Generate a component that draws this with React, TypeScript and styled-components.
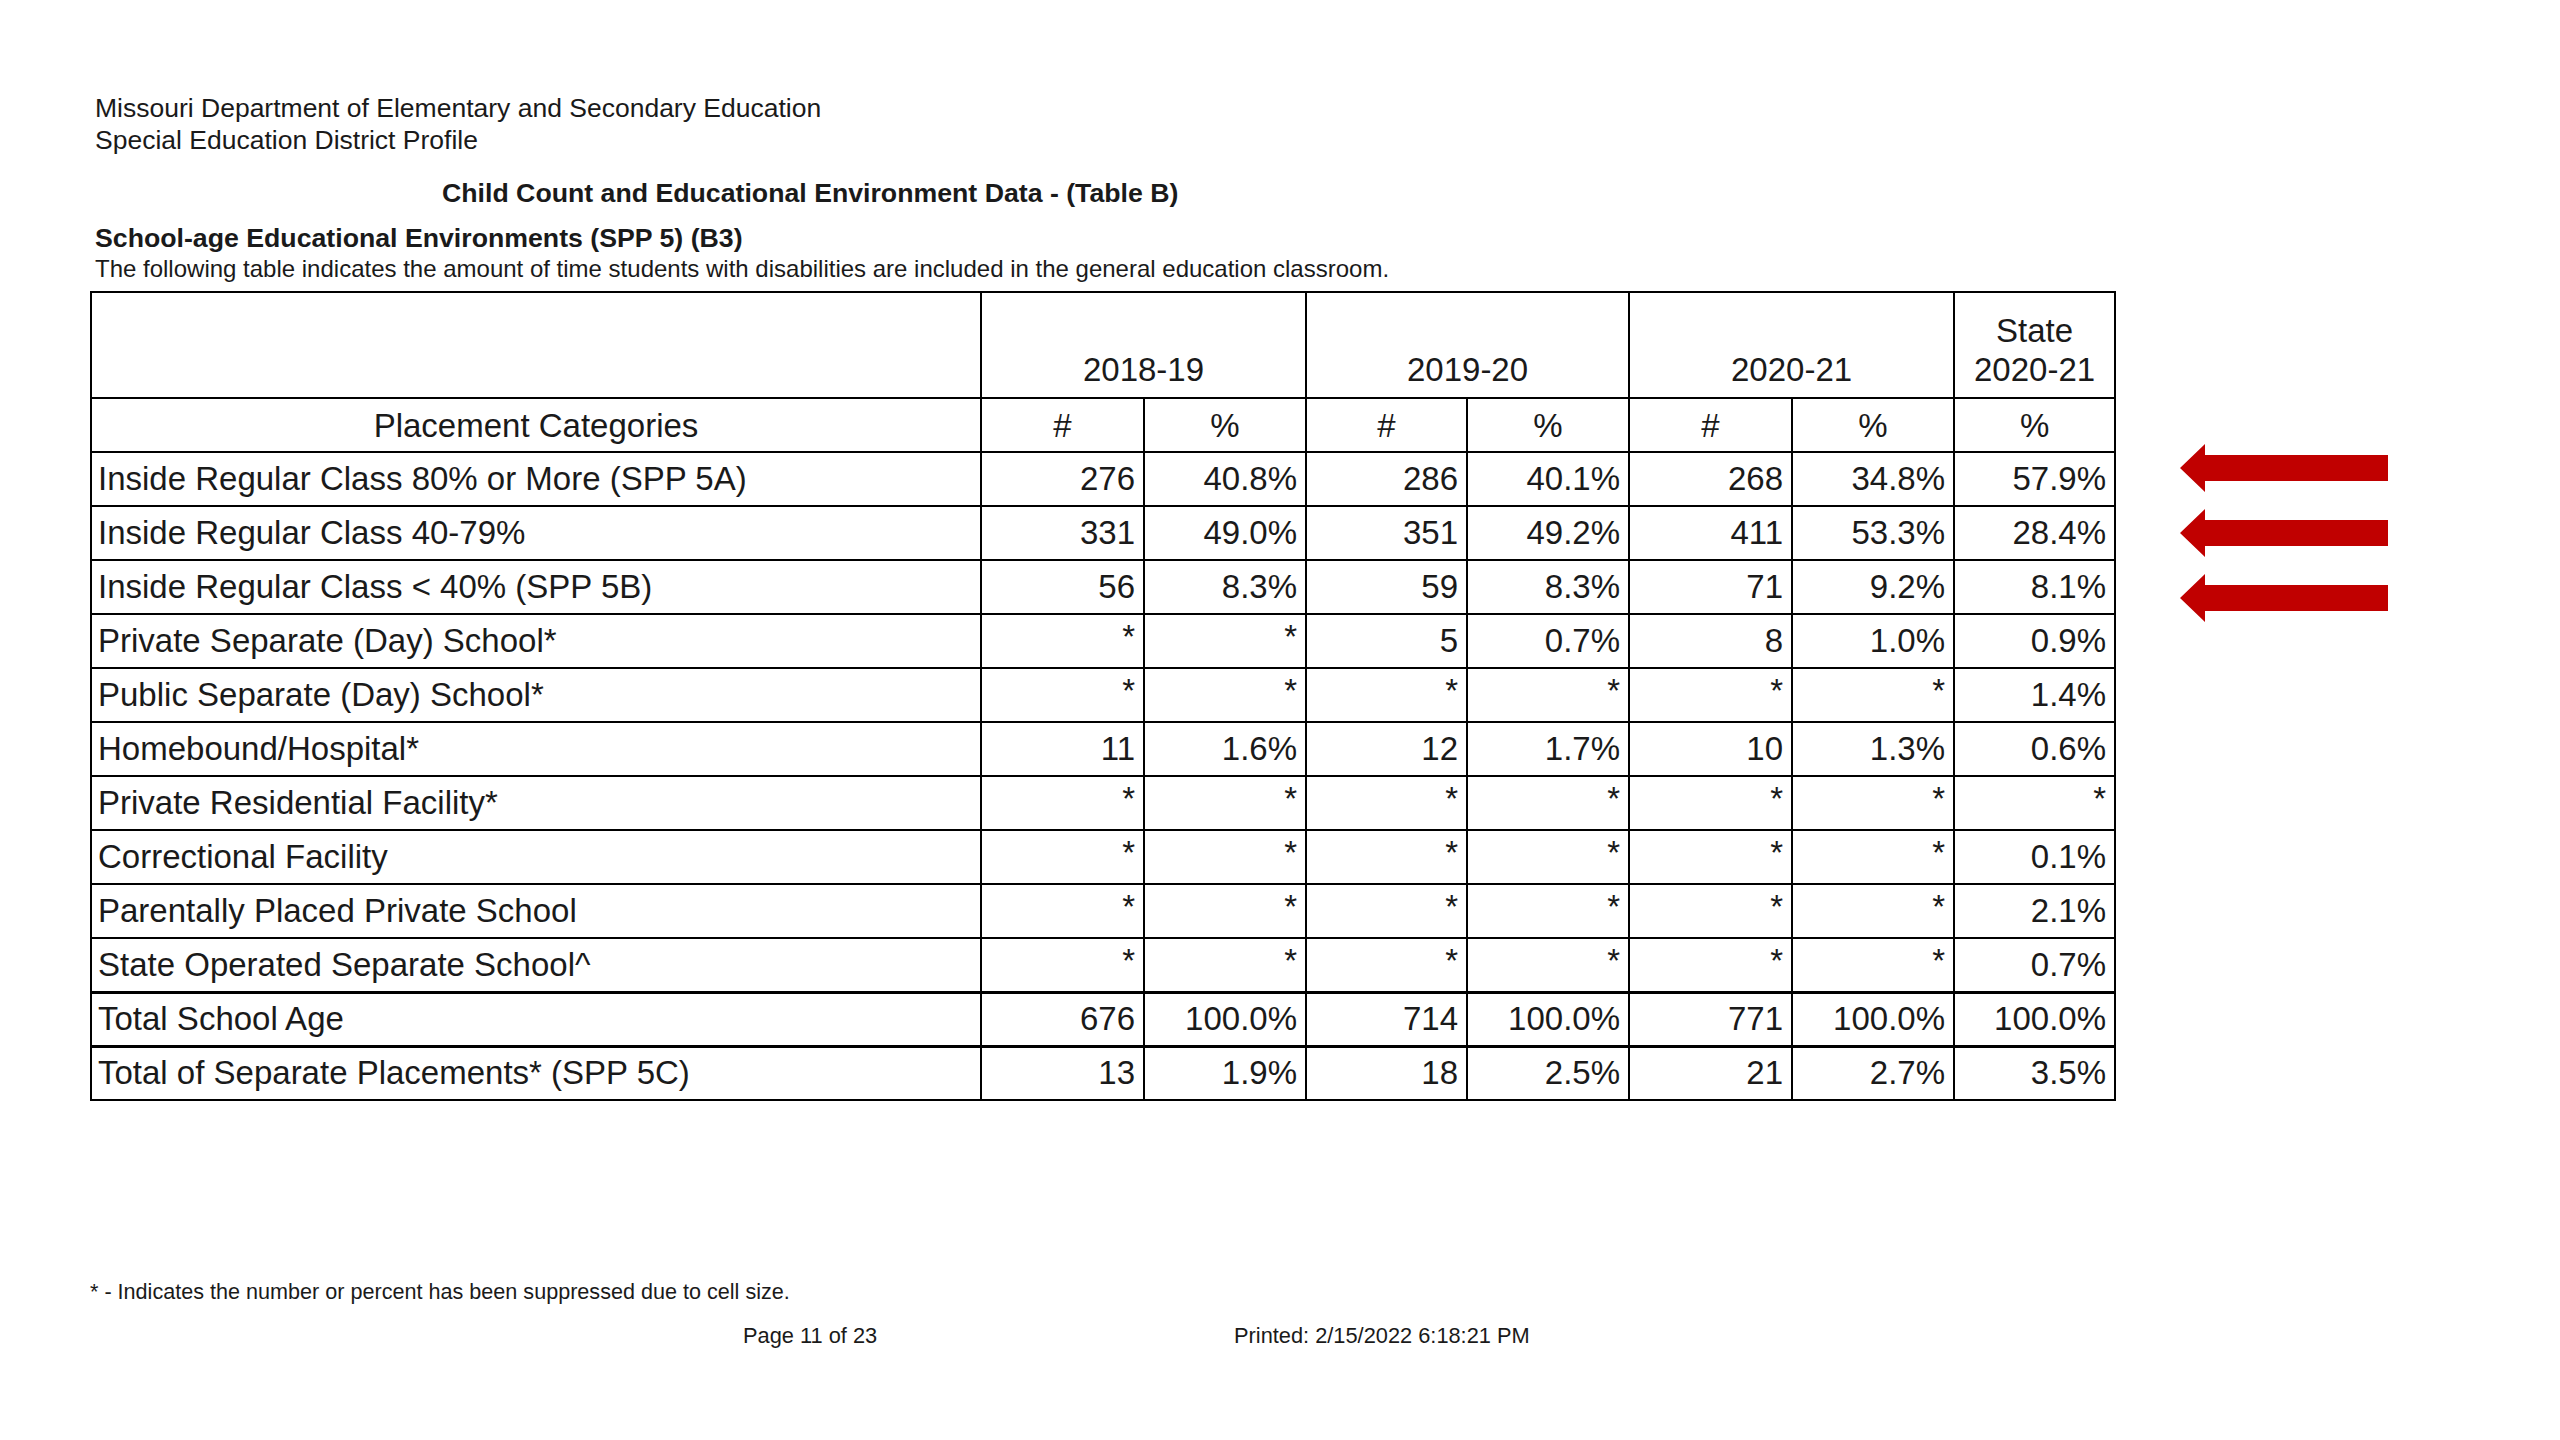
import React from "react";
import styled, { createGlobalStyle } from "styled-components";

const GlobalStyle = createGlobalStyle`
  html, body {
    margin: 0;
    padding: 0;
    background: #ffffff;
  }
  body {
    font-family: "Liberation Sans", Arial, sans-serif;
    color: #1a1a1a;
  }
`;

const Page = styled("div")`
  width: 2560px;
  height: 1440px;
  box-sizing: border-box;
  padding: 92px 0 0 90px;
  background: #ffffff;
  overflow: hidden;
`;

const HeaderLine = styled("div")`
  font-size: 26.5px;
  line-height: 32px;
  padding-left: 5px;
`;

const ReportTitle = styled("div")`
  font-size: 26.7px;
  font-weight: 700;
  line-height: 32px;
  margin-top: 21px;
  padding-left: 352px;
`;

const SectionTitle = styled("div")`
  font-size: 26.7px;
  font-weight: 700;
  line-height: 32px;
  margin-top: 13px;
  padding-left: 5px;
`;

const SectionNote = styled("div")`
  font-size: 24px;
  line-height: 28px;
  margin-top: 1px;
  padding-left: 5px;
`;

const TableArea = styled("div")`
  display: flex;
  align-items: flex-start;
  margin-top: 8px;
`;

const DataTable = styled("table")`
  border-collapse: collapse;
  table-layout: fixed;
  width: 2024px;
  font-size: 33px;
  color: #1a1a1a;
`;

const HeadRow = styled("tr")<{ $tall?: boolean }>`
  height: ${({ $tall }) => ($tall ? "106px" : "54px")};
`;

const BodyRow = styled("tr")<{ $heavy?: boolean }>`
  height: 54px;
  & > td {
    border-top-width: ${({ $heavy }) => ($heavy ? "3px" : "2px")};
  }
`;

const HeadCell = styled("th")<{ $bottom?: boolean }>`
  border: 2px solid #000;
  font-weight: 400;
  text-align: center;
  vertical-align: ${({ $bottom }) => ($bottom ? "bottom" : "middle")};
  padding: ${({ $bottom }) => ($bottom ? "0 4px 8px" : "0 4px")};
  line-height: 39px;
`;

const Cell = styled("td")<{ $align?: "left" | "right"; $star?: boolean }>`
  border: 2px solid #000;
  text-align: ${({ $align }) => $align || "right"};
  vertical-align: ${({ $star }) => ($star ? "top" : "middle")};
  padding: ${({ $align, $star }) =>
    $align === "left" ? "0 6px" : $star ? "4px 8px 0 6px" : "0 8px 0 6px"};
  white-space: nowrap;
  line-height: 36px;
`;

const ArrowStack = styled("div")`
  display: flex;
  flex-direction: column;
  gap: 17px;
  padding-top: 153px;
  margin-left: 64px;
`;

const FootNote = styled("div")`
  font-size: 21.6px;
  line-height: 24px;
  margin-top: 179px;
`;

const PageFooter = styled("div")`
  display: grid;
  grid-template-columns: 491px auto;
  padding-left: 653px;
  margin-top: 20px;
  font-size: 21.8px;
  line-height: 24px;
`;

const Arrow: React.FC = () => (
  <svg width="210" height="48" viewBox="0 0 210 48">
    <polygon
      points="0,24 25,0 25,11 208,11 208,37 25,37 25,48"
      fill="#c00000"
    />
  </svg>
);

type Row = { label: string; values: string[]; heavy?: boolean };

const rows: Row[] = [
  {
    label: "Inside Regular Class 80% or More (SPP 5A)",
    values: ["276", "40.8%", "286", "40.1%", "268", "34.8%", "57.9%"],
  },
  {
    label: "Inside Regular Class 40-79%",
    values: ["331", "49.0%", "351", "49.2%", "411", "53.3%", "28.4%"],
  },
  {
    label: "Inside Regular Class < 40% (SPP 5B)",
    values: ["56", "8.3%", "59", "8.3%", "71", "9.2%", "8.1%"],
  },
  {
    label: "Private Separate (Day) School*",
    values: ["*", "*", "5", "0.7%", "8", "1.0%", "0.9%"],
  },
  {
    label: "Public Separate (Day) School*",
    values: ["*", "*", "*", "*", "*", "*", "1.4%"],
  },
  {
    label: "Homebound/Hospital*",
    values: ["11", "1.6%", "12", "1.7%", "10", "1.3%", "0.6%"],
  },
  {
    label: "Private Residential Facility*",
    values: ["*", "*", "*", "*", "*", "*", "*"],
  },
  {
    label: "Correctional Facility",
    values: ["*", "*", "*", "*", "*", "*", "0.1%"],
  },
  {
    label: "Parentally Placed Private School",
    values: ["*", "*", "*", "*", "*", "*", "2.1%"],
  },
  {
    label: "State Operated Separate School^",
    values: ["*", "*", "*", "*", "*", "*", "0.7%"],
  },
  {
    label: "Total School Age",
    values: ["676", "100.0%", "714", "100.0%", "771", "100.0%", "100.0%"],
    heavy: true,
  },
  {
    label: "Total of Separate Placements* (SPP 5C)",
    values: ["13", "1.9%", "18", "2.5%", "21", "2.7%", "3.5%"],
    heavy: true,
  },
];

const colWidths = [890, 163, 162, 161, 162, 163, 162, 161];

const App: React.FC = () => {
  return (
    <>
      <GlobalStyle />
      <Page>
        <HeaderLine>Missouri Department of Elementary and Secondary Education</HeaderLine>
        <HeaderLine>Special Education District Profile</HeaderLine>
        <ReportTitle>Child Count and Educational Environment Data - (Table B)</ReportTitle>
        <SectionTitle>School-age Educational Environments (SPP 5) (B3)</SectionTitle>
        <SectionNote>
          The following table indicates the amount of time students with
          disabilities are included in the general education classroom.
        </SectionNote>
        <TableArea>
          <DataTable>
            <colgroup>
              {colWidths.map((w, i) => (
                <col key={i} style={{ width: w }} />
              ))}
            </colgroup>
            <thead>
              <HeadRow $tall>
                <HeadCell />
                <HeadCell colSpan={2} $bottom>
                  2018-19
                </HeadCell>
                <HeadCell colSpan={2} $bottom>
                  2019-20
                </HeadCell>
                <HeadCell colSpan={2} $bottom>
                  2020-21
                </HeadCell>
                <HeadCell $bottom>
                  State
                  <br />
                  2020-21
                </HeadCell>
              </HeadRow>
              <HeadRow>
                <HeadCell>Placement Categories</HeadCell>
                <HeadCell>#</HeadCell>
                <HeadCell>%</HeadCell>
                <HeadCell>#</HeadCell>
                <HeadCell>%</HeadCell>
                <HeadCell>#</HeadCell>
                <HeadCell>%</HeadCell>
                <HeadCell>%</HeadCell>
              </HeadRow>
            </thead>
            <tbody>
              {rows.map((row) => (
                <BodyRow key={row.label} $heavy={row.heavy}>
                  <Cell $align="left">{row.label}</Cell>
                  {row.values.map((v, i) => (
                    <Cell key={i} $star={v === "*"}>
                      {v}
                    </Cell>
                  ))}
                </BodyRow>
              ))}
            </tbody>
          </DataTable>
          <ArrowStack>
            <Arrow />
            <Arrow />
            <Arrow />
          </ArrowStack>
        </TableArea>
        <FootNote>
          * - Indicates the number or percent has been suppressed due to cell size.
        </FootNote>
        <PageFooter>
          <span>Page 11 of 23</span>
          <span>Printed: 2/15/2022 6:18:21 PM</span>
        </PageFooter>
      </Page>
    </>
  );
};

export default App;
